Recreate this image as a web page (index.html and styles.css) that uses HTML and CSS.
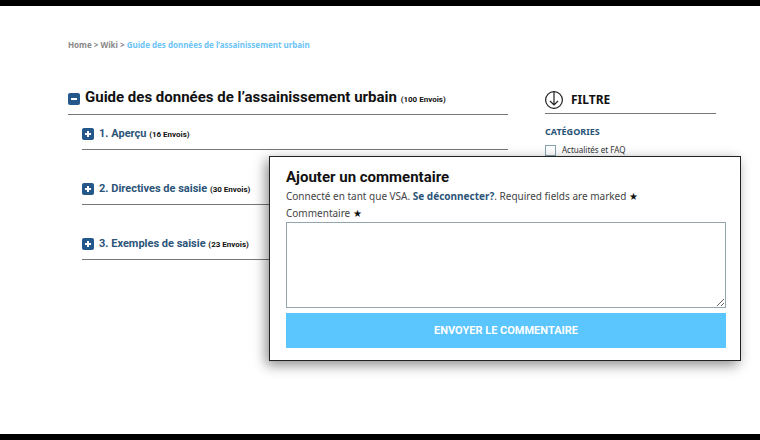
FILE: index.html
```html
<!DOCTYPE html>
<html lang="fr">
<head>
    <meta charset="UTF-8">
    <meta name="viewport" content="width=device-width, initial-scale=1.0">
    <title>Guide des données de l’assainissement urbain</title>
    <link rel="stylesheet" href="styles.css">
</head>
<body>
    <div class="page">
        <nav class="breadcrumb">
            <a href="#">Home</a> &gt; <a href="#">Wiki</a> &gt;
            <a href="#" class="current">Guide des données de l’assainissement urbain</a>
        </nav>

        <div class="columns">
            <main>
                <h1 class="wiki-title">
                    <button class="toggle" aria-label="Réduire">
                        <svg viewBox="0 0 12 12"><path d="M3 6h6"/></svg>
                    </button>
                    <span>Guide des données de l’assainissement urbain <small>(100 Envois)</small></span>
                </h1>
                <ul class="chapters">
                    <li class="chapter">
                        <button class="toggle" aria-label="Ouvrir">
                            <svg viewBox="0 0 12 12"><path d="M3 6h6M6 3v6"/></svg>
                        </button>
                        <span><a href="#">1. Aperçu</a> <small>(16 Envois)</small></span>
                    </li>
                    <li class="chapter">
                        <button class="toggle" aria-label="Ouvrir">
                            <svg viewBox="0 0 12 12"><path d="M3 6h6M6 3v6"/></svg>
                        </button>
                        <span><a href="#">2. Directives de saisie</a> <small>(30 Envois)</small></span>
                    </li>
                    <li class="chapter">
                        <button class="toggle" aria-label="Ouvrir">
                            <svg viewBox="0 0 12 12"><path d="M3 6h6M6 3v6"/></svg>
                        </button>
                        <span><a href="#">3. Exemples de saisie</a> <small>(23 Envois)</small></span>
                    </li>
                </ul>
            </main>

            <aside>
                <h2 class="filter-title">
                    <svg viewBox="0 0 18 18"><circle cx="9" cy="9" r="8.4"/><path d="M9 1v13M5 10l4 4 4-4"/></svg>
                    FILTRE
                </h2>
                <h3 class="filter-group">CATÉGORIES</h3>
                <label class="filter-option"><input type="checkbox"> Actualités et FAQ</label>
            </aside>
        </div>

        <form class="comment-box">
            <h2>Ajouter un commentaire</h2>
            <p>Connecté en tant que VSA. <a href="#">Se déconnecter?</a>. Required fields are marked <span class="star">★</span></p>
            <label for="comment">Commentaire <span class="star">★</span></label>
            <textarea id="comment"></textarea>
            <button type="submit">ENVOYER LE COMMENTAIRE</button>
        </form>
    </div>
</body>
</html>
```
FILE: styles.css
```css
* {
    box-sizing: border-box;
}

body {
    margin: 0;
    font-family: "Noto Sans", "Open Sans", sans-serif;
    color: #111;
    background: #fff;
}

a {
    color: inherit;
    text-decoration: none;
}

h1, h2, h3, p, ul {
    margin: 0;
    padding: 0;
}

.page {
    position: relative;
    min-height: 100vh;
    padding: 32px 44px 32px 68px;
    border-top: 6px solid #000;
    border-bottom: 6px solid #000;
}

.breadcrumb {
    font-size: 8px;
    line-height: 14px;
    font-weight: 700;
    color: #888;
}

.breadcrumb .current {
    color: #6cc4f5;
}

.columns {
    display: grid;
    grid-template-columns: 440fr 171fr;
    gap: 37px;
    margin-top: 34px;
}

.wiki-title {
    display: flex;
    align-items: center;
    gap: 5px;
    height: 29px;
    padding-bottom: 3px;
    border-bottom: 1px solid #777;
    font-family: Roboto, sans-serif;
    font-size: 15px;
    line-height: 20px;
    white-space: nowrap;
}

small {
    font-size: 8px;
    font-weight: 700;
    color: #111;
}

.toggle {
    flex: none;
    width: 12px;
    height: 12px;
    padding: 0;
    border: 0;
    border-radius: 2px;
    background: #24588a;
}

.toggle svg {
    display: block;
    fill: none;
    stroke: #fff;
    stroke-width: 2;
}

.chapters {
    margin-left: 14px;
    list-style: none;
}

.chapter {
    display: flex;
    align-items: center;
    gap: 5px;
    height: 35px;
    padding-top: 4px;
    margin-bottom: 20px;
    border-bottom: 1px solid #777;
    font-family: Roboto, sans-serif;
    font-size: 11px;
    line-height: 16px;
    font-weight: 700;
    color: #2b5478;
    white-space: nowrap;
}

.filter-title {
    display: flex;
    align-items: center;
    gap: 8px;
    height: 28px;
    border-bottom: 1px solid #777;
    font-size: 12px;
    line-height: 16px;
}

.filter-title svg {
    width: 18px;
    height: 18px;
    fill: none;
    stroke: #222;
    stroke-width: 1.2;
}

.filter-group {
    margin-top: 11px;
    font-size: 9px;
    line-height: 14px;
    color: #2b5478;
}

.filter-option {
    display: flex;
    align-items: center;
    gap: 6px;
    margin-top: 4px;
    font-size: 8px;
    line-height: 14px;
    color: #333;
}

.filter-option input {
    appearance: none;
    width: 11px;
    height: 11px;
    margin: 0;
    border: 1px solid #86a3b2;
}

/* floats over the wiki list */
.comment-box {
    position: absolute;
    top: 150px;
    left: 269px;
    right: 19px;
    display: flex;
    flex-direction: column;
    padding: 12px 14px 12px 16px;
    border: 1px solid #222;
    background: #fff;
    box-shadow: -3px 4px 12px rgba(0, 0, 0, 0.45);
    font-size: 10px;
    line-height: 16px;
    color: #444;
}

.comment-box h2 {
    font-family: Roboto, sans-serif;
    font-size: 15px;
    line-height: 16px;
    margin-bottom: 3px;
    color: #111;
}

.comment-box a {
    font-weight: 700;
    color: #2b5478;
}

.star {
    font-family: "DejaVu Sans", sans-serif;
    color: #111;
}

.comment-box textarea {
    height: 86px;
    border: 1px solid #93a5ad;
    background: #fff;
    resize: vertical;
}

.comment-box button {
    height: 35px;
    margin-top: 5px;
    border: 0;
    background: #5bc5fe;
    color: #fff;
    font-family: Roboto, sans-serif;
    font-size: 11px;
    font-weight: 700;
}
```
